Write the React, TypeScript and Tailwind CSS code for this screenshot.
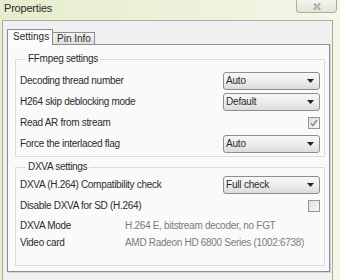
function Combo({ value }: { value: string }) {
  return (
    <div className="flex h-[18px] w-[97px] items-center justify-between rounded-[3px] border border-[#8e8e8e] bg-gradient-to-b from-[#f7f7f7] via-[#ededed] to-[#dcdcdc] pl-[2px] pr-[5px]">
      <span className="text-[10px] leading-[12px] tracking-[-0.2px] text-[#2a2a2a]">{value}</span>
      <svg width="7" height="4" viewBox="0 0 7 4">
        <path d="M0 0h7L3.5 4z" fill="#222" />
      </svg>
    </div>
  );
}

function Check({ checked }: { checked?: boolean }) {
  return (
    <div className="flex h-[12px] w-[12px] items-center justify-center border border-[#949699] bg-gradient-to-br from-[#dedede] to-[#f8f8f8]">
      {checked && (
        <svg width="8" height="8" viewBox="0 0 8 8">
          <path d="M1 4.2l2 2.3L7 1" stroke="#75819c" strokeWidth="1.3" fill="none" />
        </svg>
      )}
    </div>
  );
}

function Row({ label, h, children }: { label: string; h: string; children?: React.ReactNode }) {
  return (
    <div className={`flex items-center justify-between ${h}`}>
      <span className="text-[10px] leading-[12px] tracking-[-0.3px] text-[#2c2c2c]">{label}</span>
      {children}
    </div>
  );
}

function InfoRow({ label, value, h }: { label: string; value: string; h: string }) {
  return (
    <div className={`flex items-center ${h}`}>
      <span className="w-[105px] shrink-0 text-[10px] leading-[12px] tracking-[-0.3px] text-[#2c2c2c]">{label}</span>
      <span className="whitespace-nowrap text-[10px] leading-[12px] tracking-[-0.3px] text-[#7a7a7a]">{value}</span>
    </div>
  );
}

export default function App() {
  return (
    <div className="h-[280px] w-[340px] overflow-hidden bg-gradient-to-r from-[#e6edcc] via-[#edf1d9] to-[#f4f6e8] font-['Liberation_Sans',Arial,sans-serif]">
      {/* title bar */}
      <div className="flex h-[20px] items-start justify-between">
        <span className="pl-[4px] pt-[2px] text-[11px] leading-[13px] tracking-[-0.2px] text-[#2a2a2a]">
          Properties
        </span>
        <div className="mr-[3px] flex h-[13px] w-[41px] items-center justify-center rounded-b-[4px] border-x border-b border-[#a9ae9f] bg-gradient-to-b from-[#f4f5ee] to-[#e2e5d5]">
          <svg width="8" height="7" viewBox="0 0 8 7">
            <path d="M1 0.5l6 6M7 0.5l-6 6" stroke="#8a8d88" strokeWidth="2" />
            <path d="M1 0.5l6 6M7 0.5l-6 6" stroke="#f4f4f4" strokeWidth="0.8" />
          </svg>
        </div>
      </div>

      {/* client area */}
      <div className="ml-[2px] h-[260px] w-[331px] border-x border-t border-[#a7ae9f] bg-[#f0f0f0]">
        {/* tabs */}
        <div className="ml-[4px] mt-[8px] flex h-[16px] items-end">
          <div className="relative z-10 flex h-[16px] w-[46px] items-center border-x border-t border-[#898c95] bg-[#fcfcfc] pl-[5px] pb-[1px]">
            <span className="text-[10px] leading-[12px] text-[#2a2a2a]">Settings</span>
          </div>
          <div className="-ml-px flex h-[13px] w-[43px] items-center border-r border-t border-[#898c95] bg-gradient-to-b from-[#f2f2f2] to-[#dedede] pl-[5px]">
            <span className="text-[10px] leading-[12px] text-[#2a2a2a]">Pin Info</span>
          </div>
        </div>

        {/* tab page */}
        <div className="relative -mt-px ml-[4px] w-[323px] border border-[#898c95] bg-[#fafafa] pl-[7px] pr-[4px] pb-[5px] shadow-[1px_1px_0_#d2d2d2]">
          <fieldset className="mt-[8px] border border-[#d9dcdf] pl-[4px] pr-[4px] pb-[2px]">
            <legend className="ml-[6px] px-[2px] text-[10px] leading-[12px] tracking-[-0.3px] text-[#2c2c2c]">
              FFmpeg settings
            </legend>
            <div className="pt-[5px]">
              <Row label="Decoding thread number" h="h-[21px]">
                <Combo value="Auto" />
              </Row>
              <Row label="H264 skip deblocking mode" h="h-[21px]">
                <Combo value="Default" />
              </Row>
              <Row label="Read AR from stream" h="h-[21px]">
                <Check checked />
              </Row>
              <Row label="Force the interlaced flag" h="h-[21px]">
                <Combo value="Auto" />
              </Row>
            </div>
          </fieldset>

          <fieldset className="mt-[4px] border border-[#d9dcdf] pl-[4px] pr-[4px] pb-[14px]">
            <legend className="ml-[6px] px-[2px] text-[10px] leading-[12px] tracking-[-0.3px] text-[#2c2c2c]">
              DXVA settings
            </legend>
            <div className="pt-[1px]">
              <Row label="DXVA (H.264) Compatibility check" h="h-[21px]">
                <Combo value="Full check" />
              </Row>
              <Row label="Disable DXVA for SD (H.264)" h="h-[22px]">
                <Check />
              </Row>
              <InfoRow label="DXVA Mode" value="H.264 E, bitstream decoder, no FGT" h="h-[17px]" />
              <InfoRow label="Video card" value="AMD Radeon HD 6800 Series (1002:6738)" h="h-[17px]" />
            </div>
          </fieldset>
        </div>
      </div>
    </div>
  );
}
